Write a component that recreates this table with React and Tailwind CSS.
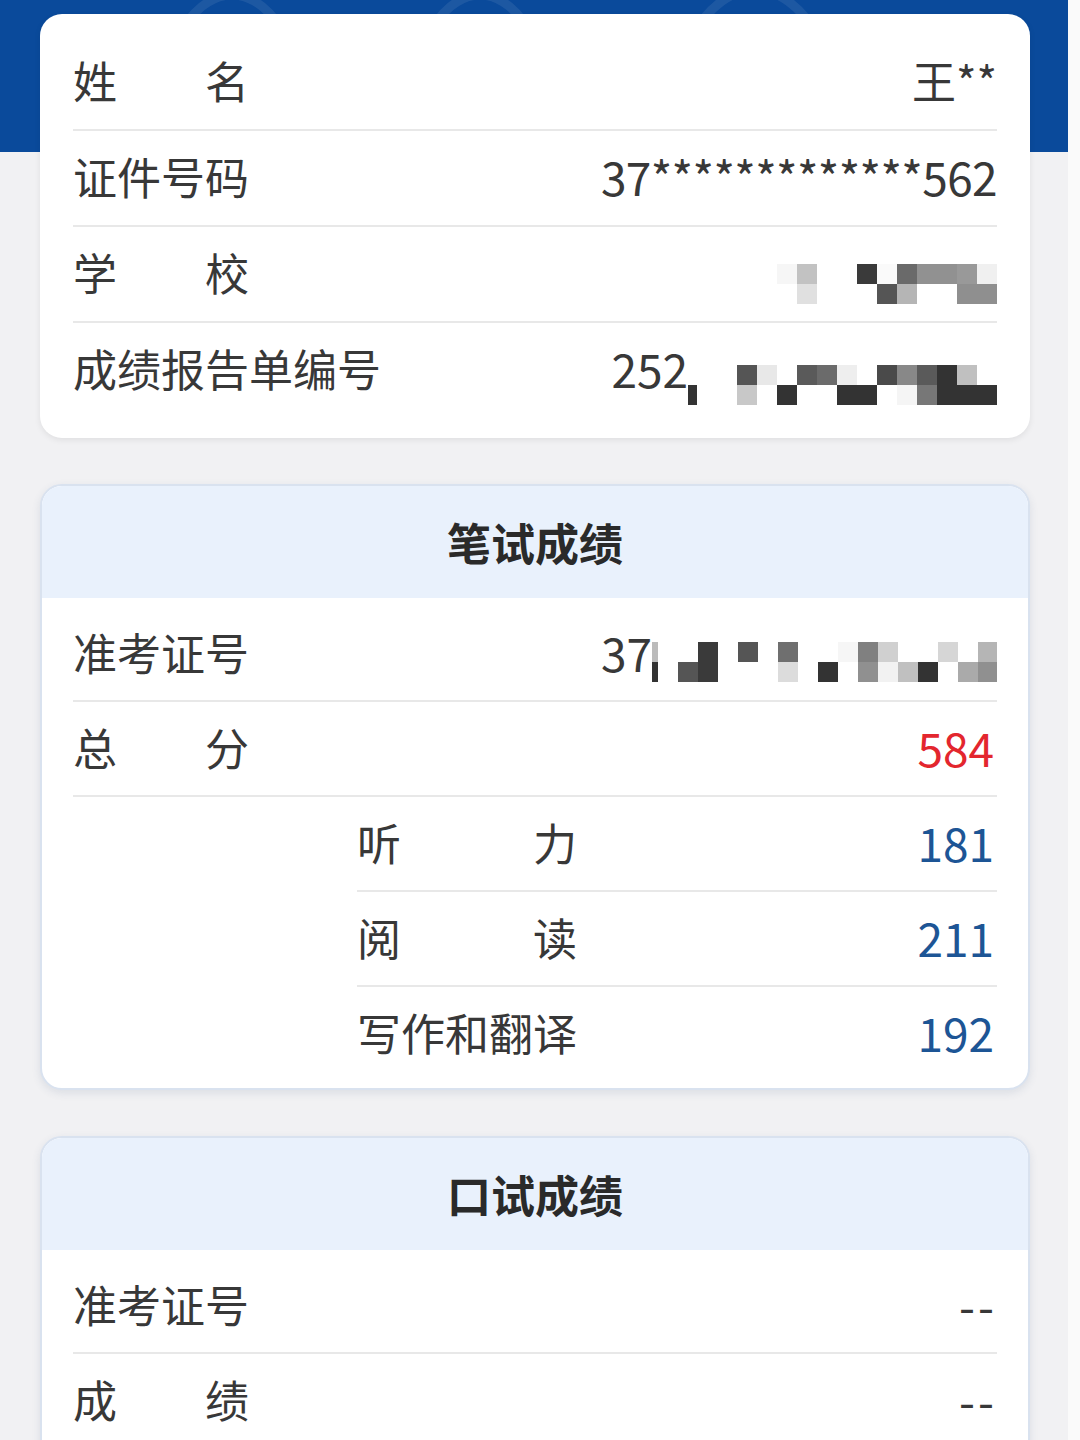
import React from "react";

const W = "bg-white";

// mosaic columns: [width, top cell, bottom cell]
const SCHOOL_MOSAIC = [
  ["w-[20px]", "bg-[#f6f6f6]", W],
  ["w-[20px]", "bg-[#c2c2c2]", "bg-[#e0e0e0]"],
  ["w-[20px]", W, W],
  ["w-[20px]", W, W],
  ["w-[20px]", "bg-[#3a3a3a]", W],
  ["w-[20px]", "bg-[#fafafa]", "bg-[#555555]"],
  ["w-[20px]", "bg-[#6a6a6a]", "bg-[#b5b5b5]"],
  ["w-[20px]", "bg-[#919191]", W],
  ["w-[20px]", "bg-[#919191]", W],
  ["w-[20px]", "bg-[#999999]", "bg-[#8f8f8f]"],
  ["w-[20px]", "bg-[#f0f0f0]", "bg-[#8f8f8f]"],
];

const REPORT_MOSAIC = [
  ["w-[20px]", "bg-[#555555]", "bg-[#c8c8c8]"],
  ["w-[20px]", "bg-[#e8e8e8]", W],
  ["w-[20px]", W, "bg-[#333333]"],
  ["w-[20px]", "bg-[#5a5a5a]", W],
  ["w-[20px]", "bg-[#6b6b6b]", W],
  ["w-[20px]", "bg-[#eeeeee]", "bg-[#333333]"],
  ["w-[20px]", W, "bg-[#333333]"],
  ["w-[20px]", "bg-[#4a4a4a]", W],
  ["w-[20px]", "bg-[#888888]", "bg-[#f5f5f5]"],
  ["w-[20px]", "bg-[#5a5a5a]", "bg-[#777777]"],
  ["w-[20px]", "bg-[#333333]", "bg-[#333333]"],
  ["w-[20px]", "bg-[#c0c0c0]", "bg-[#333333]"],
  ["w-[20px]", W, "bg-[#333333]"],
];

const TICKET_MOSAIC = [
  ["w-[20px]", W, "bg-[#555555]"],
  ["w-[20px]", "bg-[#3a3a3a]", "bg-[#3a3a3a]"],
  ["w-[20px]", W, W],
  ["w-[20px]", "bg-[#555555]", W],
  ["w-[20px]", W, W],
  ["w-[20px]", "bg-[#6f6f6f]", "bg-[#dcdcdc]"],
  ["w-[20px]", W, W],
  ["w-[20px]", W, "bg-[#333333]"],
  ["w-[20px]", "bg-[#f6f6f6]", W],
  ["w-[20px]", "bg-[#808080]", "bg-[#909090]"],
  ["w-[20px]", "bg-[#d0d0d0]", "bg-[#f2f2f2]"],
  ["w-[20px]", W, "bg-[#c0c0c0]"],
  ["w-[20px]", W, "bg-[#333333]"],
  ["w-[20px]", "bg-[#d6d6d6]", W],
  ["w-[20px]", W, "bg-[#aaaaaa]"],
  ["w-[19px]", "bg-[#b5b5b5]", "bg-[#909090]"],
];

function Mosaic({ cols, className = "" }) {
  return (
    <div className={`flex ${className}`}>
      {cols.map(([w, top, bottom], i) => (
        <div key={i} className={`flex flex-col ${w}`}>
          <div className={`h-[20px] ${top}`} />
          <div className={`h-[20px] ${bottom}`} />
        </div>
      ))}
    </div>
  );
}

function Label({ chars, width = "w-[176px]" }) {
  if (chars.length === 2) {
    return (
      <div className={`flex justify-between ${width}`}>
        <span>{chars[0]}</span>
        <span>{chars[1]}</span>
      </div>
    );
  }
  return <span>{chars}</span>;
}

function Row({ label, children, last, h = "h-[95px]", labelWidth }) {
  return (
    <div
      className={`flex items-center justify-between pb-[4px] ${h} ${last ? "" : "border-b-2 border-[#e8e8e8]"}`}
    >
      <Label chars={label} width={labelWidth} />
      <div className="flex items-center">{children}</div>
    </div>
  );
}

function Card({ title, children, pb = "pb-[8px]" }) {
  return (
    <div className="overflow-hidden rounded-[22px] border-2 border-[#d9e2ef] bg-white shadow-[0_3px_8px_rgba(60,80,120,0.12)]">
      <div className="flex h-[112px] items-center justify-center bg-[#e9f1fc] text-[44px] font-bold leading-none text-[#2a2a2a]">
        {title}
      </div>
      <div className={`px-[31px] pt-[9px] ${pb}`}>{children}</div>
    </div>
  );
}

function BandPattern() {
  return (
    <svg className="absolute inset-0 h-full w-full" viewBox="0 0 1068 152" fill="none">
      <g stroke="#ffffff" strokeOpacity="0.08" strokeWidth="9">
        <ellipse cx="232" cy="160" rx="82" ry="165" />
        <ellipse cx="480" cy="160" rx="80" ry="165" />
        <ellipse cx="755" cy="150" rx="90" ry="160" />
      </g>
    </svg>
  );
}

export default function App() {
  return (
    <div className="flex h-[1440px] overflow-hidden bg-[#fafafa] font-['Noto_Sans_CJK_SC','Noto_Sans',sans-serif] text-[44px] leading-none text-[#383838]">
      <div className="relative w-[1068px] bg-[#f1f1f3]">
        <div className="absolute inset-x-0 top-0 h-[152px] overflow-hidden bg-[#0a4a9b]">
          <BandPattern />
        </div>

        <div className="relative ml-[40px] flex w-[990px] flex-col gap-[46px] pt-[14px]">
          {/* 个人信息 */}
          <div className="rounded-[22px] bg-white px-[33px] py-[21px] shadow-[0_2px_6px_rgba(0,0,0,0.08)]">
            <Row label="姓名" h="h-[96px]">
              <span>王**</span>
            </Row>
            <Row label="证件号码" h="h-[96px]">
              <span className="text-[46px] tracking-[-0.6px]">37*************562</span>
            </Row>
            <Row label="学校" h="h-[96px]">
              <Mosaic cols={SCHOOL_MOSAIC} className="mt-[24px]" />
            </Row>
            <Row label="成绩报告单编号" h="h-[94px]" last>
              <span className="text-[46px]">252</span>
              <div className="mt-[34px] flex flex-col">
                <div className="h-[20px] w-[9px] bg-white" />
                <div className="h-[20px] w-[9px] bg-[#333333]" />
              </div>
              <div className="w-[40px]" />
              <Mosaic cols={REPORT_MOSAIC} className="mt-[34px]" />
            </Row>
          </div>

          {/* 笔试成绩 */}
          <Card title="笔试成绩">
            <Row label="准考证号">
              <span className="text-[46px]">37</span>
              <div className="mt-[20px] flex flex-col">
                <div className="h-[20px] w-[6px] bg-[#bbbbbb]" />
                <div className="h-[20px] w-[6px] bg-[#333333]" />
              </div>
              <div className="w-[20px]" />
              <Mosaic cols={TICKET_MOSAIC} className="mt-[20px]" />
            </Row>
            <Row label="总分">
              <span className="mr-[3px] text-[46px] text-[#e3262e]">584</span>
            </Row>
            <div className="ml-[284px]">
              <Row label="听力" labelWidth="w-[220px]">
                <span className="mr-[3px] text-[46px] text-[#1d5595]">181</span>
              </Row>
              <Row label="阅读" labelWidth="w-[220px]">
                <span className="mr-[3px] text-[46px] text-[#1d5595]">211</span>
              </Row>
              <Row label="写作和翻译" h="h-[93px]" last>
                <span className="mr-[3px] text-[46px] text-[#1d5595]">192</span>
              </Row>
            </div>
          </Card>

          {/* 口试成绩 */}
          <Card title="口试成绩" pb="pb-[40px]">
            <Row label="准考证号">
              <span className="text-[46px] tracking-[3px]">--</span>
            </Row>
            <Row label="成绩" h="h-[93px]" last>
              <span className="text-[46px] tracking-[3px]">--</span>
            </Row>
          </Card>
        </div>
      </div>
    </div>
  );
}
